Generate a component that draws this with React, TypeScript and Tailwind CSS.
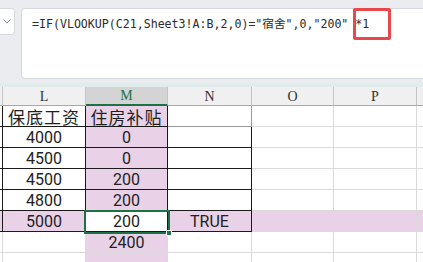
import React from 'react';

const BLK = 'border-[#1a1a1a]';

type Row = { L: string; M: string; N?: string; boxed: boolean; pink?: boolean };

const rows: Row[] = [
  { L: '保底工资', M: '住房补贴', boxed: true },
  { L: '4000', M: '0', boxed: true },
  { L: '4500', M: '0', boxed: true },
  { L: '4500', M: '200', boxed: true },
  { L: '4800', M: '200', boxed: true },
  { L: '5000', M: '200', N: 'TRUE', boxed: true, pink: true },
  { L: '', M: '2400', boxed: false },
  { L: '', M: '', boxed: false },
];

const cjk = '"Noto Sans CJK SC", sans-serif';

function CellText({ v }: { v?: string }) {
  if (!v) return null;
  const isCjk = /[\u4e00-\u9fff]/.test(v);
  return isCjk ? (
    <span className="text-[17px] tracking-[1px] text-[#1f1f1f] leading-none" style={{ fontFamily: cjk }}>
      {v}
    </span>
  ) : (
    <span className="font-['Roboto',sans-serif] text-[16px] text-[#222] leading-none translate-y-[1px]">{v}</span>
  );
}

function SheetRow({ row, idx }: { row: Row; idx: number }) {
  const bg = row.pink ? 'bg-[#e9d2e7]' : 'bg-white';
  const gridB = 'border-b border-[#dadada]';
  const gridR = 'border-r border-[#dadada]';
  const boxB = row.boxed ? `border-b ${BLK}` : gridB;
  const boxR = row.boxed ? `border-r ${BLK}` : gridR;
  const nB = idx === 0 ? 'border-b border-[#9a9a9a]' : boxB;

  return (
    <>
      <div className={`h-[21px] ${bg} ${boxR} ${boxB}`} />
      <div className={`h-[21px] ${bg} ${boxR} ${boxB} flex items-center justify-center`}>
        <CellText v={row.L} />
      </div>
      <div className={`h-[21px] ${row.pink ? 'bg-white' : 'bg-[#e9d2e7]'} ${boxR} ${boxB} flex items-center justify-center`}>
        <CellText v={row.M} />
      </div>
      <div className={`h-[21px] ${bg} ${boxR} ${nB} flex items-center justify-center`}>
        <CellText v={row.N} />
      </div>
      <div className={`h-[21px] ${bg} ${gridR} ${gridB}`} />
      <div className={`h-[21px] ${bg} ${gridR} ${gridB}`} />
      <div className={`h-[21px] ${bg} ${gridB}`} />
    </>
  );
}

export default function App() {
  const headers = ['', 'L', 'M', 'N', 'O', 'P', ''];

  return (
    <div className="w-[423px] h-[262px] overflow-hidden bg-white">
      {/* formula bar */}
      <div className="h-[83px] bg-[#eaecef] flex items-start pt-[8px] gap-[6px]">
        <div className="w-[15px] h-[27px] bg-white border border-l-0 border-[#d6d9de] rounded-r-[4px] flex items-center justify-center">
          <svg width="8" height="5" viewBox="0 0 8 5" fill="none">
            <path d="M0.5 0.5 L4 4 L7.5 0.5" stroke="#8a8f96" strokeWidth="1" />
          </svg>
        </div>
        <div className="relative flex-1 h-[71px] bg-white border border-r-0 border-[#d6d9de] rounded-l-[4px]">
          <div
            className="pl-[10px] pt-[7px] text-[11.6px] leading-[16px] text-[#2b2b2b] whitespace-nowrap"
            style={{ fontFamily: '"DejaVu Sans Mono", "Noto Sans CJK SC", monospace' }}
          >
            =IF(VLOOKUP(C21,Sheet3!A:B,2,0)="宿舍",0,"200" *1
          </div>
          <div className="absolute left-[331px] top-[-1px] w-[38px] h-[32px] border-[3px] border-[#e8474c] rounded-[2px]" />
        </div>
      </div>
      <div className="h-[4px] bg-[#e0ebec]" />

      {/* grid */}
      <div className="relative grid grid-cols-[3px_83px_82px_84px_82px_83px_6px]">
        {headers.map((h, i) => (
          <div
            key={i}
            className={`h-[19px] flex items-center justify-center text-[14px] font-['Liberation_Serif',serif] ${
              i === 2
                ? 'bg-[#d4d4d4] text-[#1e7145] border-b-2 border-[#1e7145] border-r border-r-[#c4c4c4]'
                : i === 6
                ? 'bg-[#f0f0f0] border-b border-[#a8a8a8] text-[#333]'
                : 'bg-[#f0f0f0] border-b border-[#a8a8a8] border-r border-r-[#c4c4c4] text-[#333]'
            }`}
          >
            {h}
          </div>
        ))}
        {rows.map((r, i) => (
          <SheetRow key={i} row={r} idx={i} />
        ))}

        {/* selected cell */}
        <div className="absolute left-[84px] top-[123px] w-[86px] h-[24px] border-2 border-[#1e7145]" />
        <div className="absolute left-[166px] top-[143px] w-[6px] h-[6px] bg-[#1e7145] border border-white" />
      </div>
    </div>
  );
}
